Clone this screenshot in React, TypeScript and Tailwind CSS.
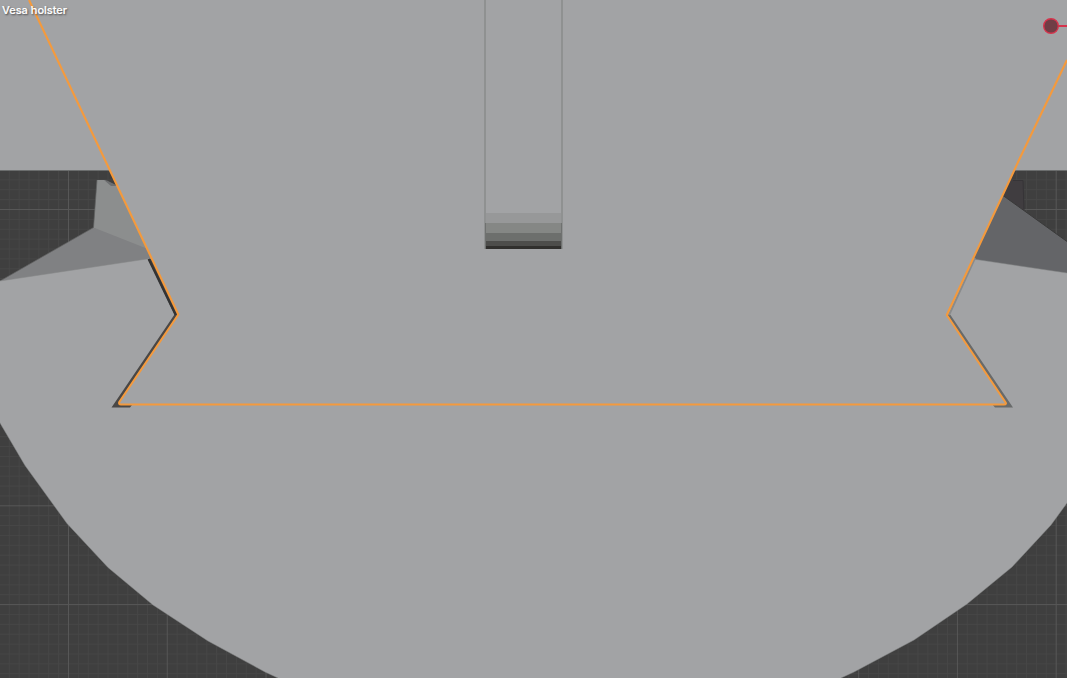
const STEP = 9.877;

const columns = Array.from({ length: 110 }, (_, i) => ({ at: 68.5 + (i - 7) * STEP, major: (i - 7) % 10 === 0 }));
const rows = Array.from({ length: 70 }, (_, i) => ({ at: 209.5 + (i - 21) * STEP, major: (i - 21) % 10 === 0 }));

function Grid() {
  return (
    <g strokeWidth="1">
      {[false, true].map((major) => (
        <g key={String(major)} stroke={major ? "#575757" : "#474747"}>
          {columns.filter((c) => c.major === major).map((c) => (
            <line key={"c" + c.at} x1={c.at} x2={c.at} y1="0" y2="678" />
          ))}
          {rows.filter((r) => r.major === major).map((r) => (
            <line key={"r" + r.at} x1="0" x2="1067" y1={r.at} y2={r.at} />
          ))}
        </g>
      ))}
    </g>
  );
}

function Model() {
  return (
    <g>
      {/* Back plate */}
      <rect width="1067" height="170.5" fill="#a2a3a5" />
      <path d="M0 170.5H1067" stroke="#6b6d6d" strokeWidth="1" />

      {/* Left clamp facets */}
      <path d="M97 180H105L112 186L125 186L155 260L93.5 228Z" fill="#8c8e8e" />
      <path d="M104 180L107 180.5L114 184L118 186H111Z" fill="#6d6e70" />
      <path d="M0 281L93.5 227.5L148 249L158 263L0 290Z" fill="#808183" />
      <path d="M97 180L93.5 227.5L0 281" fill="none" stroke="#626363" strokeWidth=".7" />

      {/* Right clamp facets */}
      <path d="M1000 180H1023L1024 210L1000 196Z" fill="#403d40" />
      <path d="M1013 180.5H1023L1024 210" fill="none" stroke="#363437" strokeWidth="1" />
      <path d="M1003 195.5L1067 241.5V280L970 263Z" fill="#646568" />
      <path d="M1003 195.5L1067 241.5" stroke="#393939" strokeWidth="1" />

      {/* Rounded base */}
      <path
        d="M-2 281.3L150 258.5L178 314L947 314L973 259L1069 273.3V500L1067 503L1051 525L1012 567L967 604L914 640L854 672L841 678V680H278V678L265 672L208 641L153 605L108 567.5L67 523.5L25 465.5L0 423L-2 419Z"
        fill="#a2a3a5"
        stroke="#848687"
        strokeWidth=".5"
      />

      {/* Gap around the holster */}
      <path d="M148 259H152L179 314L121 403L132 405L130 407.5H111.5L174.5 314.5Z" fill="#494746" />
      <path d="M148.7 259L175.8 315" stroke="#333334" strokeWidth="2.4" />
      <path d="M947 314L950.5 315L1013 407.5H995L992 404L1004 403Z" fill="#686a6a" />
      <path d="M975 258L949 315" stroke="#898b8c" strokeWidth="2" />

      {/* Holster */}
      <path d="M29 0L105 160L178.5 314L119 402L120 404.5H1005.5V402L946.5 315L1019 160L1067 60V0Z" fill="#a2a3a5" />

      {/* Slot */}
      <rect x="485" y="213" width="77" height="10" fill="#979899" />
      <rect x="485" y="223" width="77" height="10" fill="#858785" />
      <rect x="485" y="233" width="77" height="8" fill="#6d6f6d" />
      <rect x="485" y="241" width="77" height="5" fill="#4d4d4b" />
      <rect x="485" y="246" width="77" height="3" fill="#302f2d" />
      <path d="M485 0V249M562 0V249" stroke="#8f9191" strokeWidth="2" />
      <path d="M485.5 223V249M561.5 223V249" stroke="#6f7170" strokeWidth="1" />

      {/* Selection outline */}
      <path
        d="M29 0L105 160L178.3 314.5L119.3 402Q118.5 404.5 121 404.5H1004Q1007 404.5 1005.3 402L946.8 315L1019 160L1067 60"
        fill="none"
        stroke="#f49a3d"
        strokeWidth="2.1"
        strokeLinejoin="round"
      />
    </g>
  );
}

export default function App() {
  return (
    <main className="grid h-[678px] w-[1067px] overflow-hidden bg-[#3f3f3f]">
      <svg className="col-start-1 row-start-1" width="1067" height="678" viewBox="0 0 1067 678">
        <Grid />
        <Model />
        <path d="M1058 26H1067" stroke="#d5334c" strokeWidth="2" />
        <circle cx="1051" cy="26" r="7.3" fill="#713d45" stroke="#d5334c" strokeWidth="1.4" />
      </svg>
      <h1 className="z-10 col-start-1 row-start-1 self-start pt-[2px] pl-[2px] font-['Inter','Noto_Sans',sans-serif] text-[11px] leading-4 font-medium whitespace-nowrap text-white [-webkit-text-stroke:0.2px_white] [text-shadow:1px_1px_2px_#00000099]">
        Vesa holster
      </h1>
    </main>
  );
}
